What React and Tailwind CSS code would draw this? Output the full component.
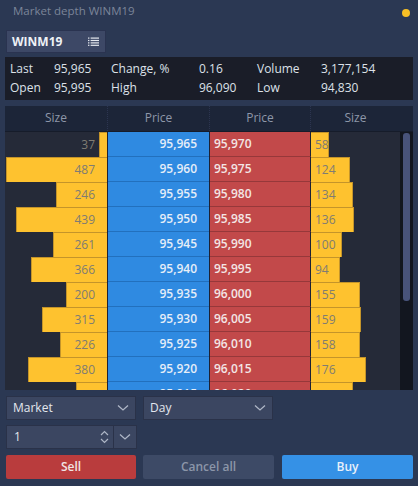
import React from "react";

const bids = [
  [37, "95,965"], [487, "95,960"], [246, "95,955"], [439, "95,950"], [261, "95,945"],
  [366, "95,940"], [200, "95,935"], [315, "95,930"], [226, "95,925"], [380, "95,920"], [151, "95,915"],
];
const asks = [
  ["95,970", 58], ["95,975", 124], ["95,980", 134], ["95,985", 136], ["95,990", 100],
  ["95,995", 94], ["96,000", 155], ["96,005", 159], ["96,010", 158], ["96,015", 176], ["96,020", 133],
];

function Chevron({ className = "" }) {
  return (
    <svg width="12" height="8" viewBox="0 0 12 8" className={className}>
      <path d="M1 1.5 L6 6 L11 1.5" fill="none" stroke="#aeb6c6" strokeWidth="1.3" />
    </svg>
  );
}

function ListIcon() {
  return (
    <svg width="11" height="9" viewBox="0 0 11 9">
      {[0.5, 2.9, 5.3, 7.7].map((y) => (
        <g key={y}>
          <rect x="0" y={y} width="1.4" height="1.2" fill="#e6e9ef" />
          <rect x="2.6" y={y} width="8.4" height="1.2" fill="#e6e9ef" />
        </g>
      ))}
    </svg>
  );
}

function Row({ i }) {
  const [bs, bp] = bids[i];
  const [ap, as] = asks[i];
  const lw = Math.round((bs * 101) / 487);
  const rw = Math.round(as * 0.313);
  return (
    <div className="flex h-[25px]">
      <div className="relative w-[103px] border-r border-[#1c2233] flex justify-end">
        <div
          className="h-full bg-[#fec22f] border-t border-l border-[#c4942a]"
          style={{ width: lw }}
        />
        <span className="absolute right-[12px] top-0 leading-[25px] text-[#7f7c73]">{bs}</span>
      </div>
      <div className="w-[101px] bg-[#2f8ae1] border-b border-[#2270bd] text-right pr-[12px] leading-[24px] font-semibold text-[#e6eef8]">
        {bp}
      </div>
      <div className="w-[1px] bg-[#1c2233]" />
      <div className="w-[101px] bg-[#c2494a] border-b border-[#96383a] border-r border-r-[#1c2233] pl-[4px] leading-[24px] font-semibold text-[#f3e6e6]">
        {ap}
      </div>
      <div className="relative w-[89px]">
        <div
          className="h-full bg-[#fec22f] border-t border-r border-[#c4942a]"
          style={{ width: rw }}
        />
        <span className="absolute left-[4px] top-0 leading-[25px] text-[#7f7c73]">{as}</span>
      </div>
    </div>
  );
}

export default function App() {
  return (
    <div
      className="w-[418px] h-[486px] bg-[#2b3853] text-[12px] overflow-hidden"
      style={{ fontFamily: '"Open Sans", sans-serif' }}
    >
      <div className="flex items-center justify-between h-[22px] pl-[13px] pr-[8px]">
        <span className="text-[#7b8599] text-[11.5px] leading-[20px]">Market depth WINM19</span>
        <span className="w-[8px] h-[8px] rounded-full bg-[#f7bf25] mt-[3px]" />
      </div>

      <div className="ml-[6px] mt-[8px] w-[100px] h-[23px] bg-[#3d4866] border border-[#2a3350] flex items-center justify-between pl-[5px] pr-[6px]">
        <span className="font-bold text-[#eef1f6]">WINM19</span>
        <ListIcon />
      </div>

      <div className="mx-[5px] mt-[4px] h-[43px] bg-[#1a1d28] pt-[2px] pl-[5px] text-[#dde1e8]">
        {[
          ["Last", "95,965", "Change, %", "0.16", "Volume", "3,177,154"],
          ["Open", "95,995", "High", "96,090", "Low", "94,830"],
        ].map((r) => (
          <div key={r[0]} className="flex h-[19px] leading-[19px]">
            <span className="w-[44px]">{r[0]}</span>
            <span className="w-[57px]">{r[1]}</span>
            <span className="w-[88px]">{r[2]}</span>
            <span className="w-[58px]">{r[3]}</span>
            <span className="w-[64px]">{r[4]}</span>
            <span>{r[5]}</span>
          </div>
        ))}
      </div>

      <div className="mx-[5px] mt-[6px] h-[284px] flex flex-col">
        <div className="flex h-[26px] bg-[#1c2538] text-[#8e97a9] leading-[24px] border-b border-[#161c2a]">
          <div className="w-[103px] text-center border-r border-dotted border-[#2c3550]">Size</div>
          <div className="w-[102px] text-center border-r border-dotted border-[#2c3550]">Price</div>
          <div className="w-[101px] text-center border-r border-dotted border-[#2c3550]">Price</div>
          <div className="w-[89px] text-center">Size</div>
          <div className="w-[13px]" />
        </div>
        <div className="flex h-[258px] bg-[#252a38] overflow-hidden">
          <div className="flex flex-col w-[395px]">
            {bids.map((_, i) => (
              <Row key={i} i={i} />
            ))}
          </div>
          <div className="w-[13px] bg-[#12161f] pt-[1px] pl-[3px]">
            <div className="w-[7px] h-[168px] rounded-[3px] bg-[#48537a]" />
          </div>
        </div>
      </div>

      <div className="flex gap-[7px] ml-[6px] mt-[6px]">
        <div className="w-[130px] h-[24px] bg-[#3b4661] border border-[#2a3249] flex items-center justify-between pl-[6px] pr-[6px] text-[#e3e7ee]">
          <span>Market</span>
          <Chevron />
        </div>
        <div className="w-[130px] h-[24px] bg-[#3b4661] border border-[#2a3249] flex items-center justify-between pl-[6px] pr-[6px] text-[#e3e7ee]">
          <span>Day</span>
          <Chevron />
        </div>
      </div>

      <div className="flex ml-[6px] mt-[5px]">
        <div className="w-[108px] h-[24px] bg-[#3b4661] border border-[#2a3249] flex items-center justify-between pl-[7px] pr-[4px] text-[#e3e7ee]">
          <span>1</span>
          <svg width="9" height="14" viewBox="0 0 9 14">
            <path d="M1 5 L4.5 1.5 L8 5" fill="none" stroke="#aeb6c6" strokeWidth="1.2" />
            <path d="M1 9 L4.5 12.5 L8 9" fill="none" stroke="#aeb6c6" strokeWidth="1.2" />
          </svg>
        </div>
        <div className="w-[23px] h-[24px] bg-[#3b4661] border border-l-0 border-[#2a3249] flex items-center justify-center">
          <Chevron />
        </div>
      </div>

      <div className="flex ml-[6px] mt-[6px] gap-[7px] font-semibold">
        <div className="w-[130px] h-[24px] rounded-[2px] bg-[#b93c3d] text-[#f1e4e4] flex items-center justify-center">Sell</div>
        <div className="w-[131px] h-[24px] rounded-[2px] bg-[#3d4a66] text-[#8c96a9] flex items-center justify-center">Cancel all</div>
        <div className="w-[131px] h-[24px] rounded-[2px] bg-[#3591e6] text-[#e8f0fa] flex items-center justify-center ml-[1px]">Buy</div>
      </div>
    </div>
  );
}
